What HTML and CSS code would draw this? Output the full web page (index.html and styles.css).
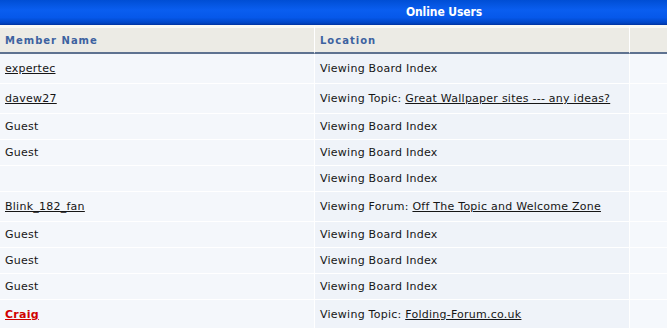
FILE: index.html
```html
<!DOCTYPE html>
<html>
<head>
<meta charset="utf-8">
<title>Online Users</title>
<link rel="stylesheet" href="styles.css">
</head>
<body>
<table class="users">
  <colgroup>
    <col class="c-name">
    <col class="c-loc">
    <col class="c-extra">
  </colgroup>
  <tr>
    <th colspan="3" class="cat">Online Users</th>
  </tr>
  <tr class="head">
    <th>Member Name</th>
    <th>Location</th>
    <th></th>
  </tr>
  <tr>
    <td class="name"><a href="#" class="lnk">expertec</a></td>
    <td class="loc">Viewing Board Index</td>
    <td class="extra"></td>
  </tr>
  <tr>
    <td class="name"><a href="#" class="lnk">davew27</a></td>
    <td class="loc">Viewing Topic: <a href="#" class="lnk">Great Wallpaper sites --- any ideas?</a></td>
    <td class="extra"></td>
  </tr>
  <tr>
    <td class="name">Guest</td>
    <td class="loc">Viewing Board Index</td>
    <td class="extra"></td>
  </tr>
  <tr>
    <td class="name">Guest</td>
    <td class="loc">Viewing Board Index</td>
    <td class="extra"></td>
  </tr>
  <tr>
    <td class="name"></td>
    <td class="loc">Viewing Board Index</td>
    <td class="extra"></td>
  </tr>
  <tr>
    <td class="name"><a href="#" class="lnk">Blink_182_fan</a></td>
    <td class="loc">Viewing Forum: <a href="#" class="lnk">Off The Topic and Welcome Zone</a></td>
    <td class="extra"></td>
  </tr>
  <tr>
    <td class="name">Guest</td>
    <td class="loc">Viewing Board Index</td>
    <td class="extra"></td>
  </tr>
  <tr>
    <td class="name">Guest</td>
    <td class="loc">Viewing Board Index</td>
    <td class="extra"></td>
  </tr>
  <tr>
    <td class="name">Guest</td>
    <td class="loc">Viewing Board Index</td>
    <td class="extra"></td>
  </tr>
  <tr>
    <td class="name"><a href="#" class="lnk admin">Craig</a></td>
    <td class="loc">Viewing Topic: <a href="#" class="lnk">Folding-Forum.co.uk</a></td>
    <td class="extra"></td>
  </tr>
</table>
</body>
</html>
```

FILE: styles.css
```css
html, body {
  margin: 0;
  padding: 0;
  background: #ffffff;
  overflow: hidden;
}

.users {
  width: 888px;
  table-layout: fixed;
  border-collapse: separate;
  border-spacing: 0;
  font-family: "DejaVu Sans", Verdana, sans-serif;
  font-size: 11px;
  letter-spacing: 0.25px;
  color: #161616;
}

.c-name { width: 315px; }
.c-loc { width: 315px; }
.c-extra { width: 258px; }

.users th,
.users td {
  box-sizing: border-box;
  text-align: left;
  vertical-align: middle;
}

.cat {
  height: 25px;
  padding: 0 0 2px 0;
  text-align: center !important;
  color: #ffffff;
  font-family: "DejaVu Sans Condensed", "Liberation Sans", sans-serif;
  font-weight: bold;
  font-size: 12px;
  letter-spacing: -0.1px;
  background: linear-gradient(#004ed4 0%, #0a5ef0 40%, #0658ea 70%, #0045c4 92%, #00329e 100%);
}

.head th {
  height: 29px;
  padding: 1px 0 0 5px;
  background: #ecebe5;
  border-top: 3px solid #f9f9f5;
  border-bottom: 2px solid #5e7290;
  border-right: 1px solid #ffffff;
  color: #3d62a0;
  font-family: "DejaVu Sans", Verdana, sans-serif;
  font-weight: bold;
  font-size: 10px;
  letter-spacing: 1px;
}

.users td {
  padding: 6px 5px 6px 5px;
  line-height: 13px;
  border-right: 1px solid #ffffff;
  border-bottom: 1px solid #ffffff;
  white-space: nowrap;
}

.name { background: #f4f7fb; }
.loc { background: #eff3f9; }
.extra { background: #f5f8fc; }

.lnk {
  display: inline-block;
  padding: 2px 0;
  color: #161616;
  text-decoration: underline;
}

.admin {
  color: #d00000;
  font-weight: bold;
}
```
